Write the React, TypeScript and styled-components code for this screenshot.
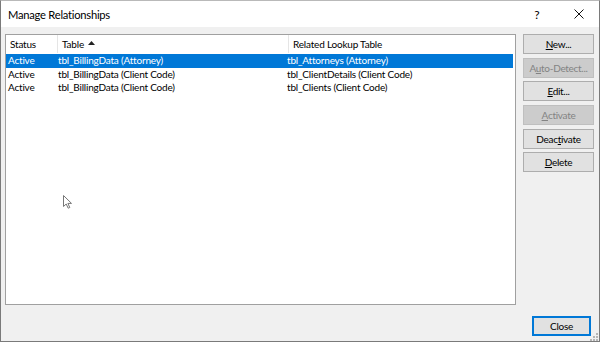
import styled, { createGlobalStyle } from "styled-components";

const GlobalStyle = createGlobalStyle`
  html, body {
    margin: 0;
    padding: 0;
    background: #ffffff;
  }
  body {
    font-family: Lato, "Liberation Sans", sans-serif;
    font-size: 12px;
    color: #000;
  }
`;

const relationships = [
  { status: "Active", table: "tbl_BillingData (Attorney)", related: "tbl_Attorneys (Attorney)" },
  { status: "Active", table: "tbl_BillingData (Client Code)", related: "tbl_ClientDetails (Client Code)" },
  { status: "Active", table: "tbl_BillingData (Client Code)", related: "tbl_Clients (Client Code)" },
];

const App = () => {
  return (
    <>
      <GlobalStyle />
      <Window>
        <TitleBar>
          <Title>Manage Relationships</Title>
          <TitleButtons>
            <HelpGlyph>?</HelpGlyph>
            <CloseGlyph width="10" height="10" viewBox="0 0 10 10">
              <path d="M0.5 0.5 L9.5 9.5 M9.5 0.5 L0.5 9.5" stroke="#111" strokeWidth="1" />
            </CloseGlyph>
          </TitleButtons>
        </TitleBar>

        <Body>
          <Main>
            <ListBox>
              <HeaderRow>
                <HeaderCell $width={52}>Status</HeaderCell>
                <HeaderCell $width={231}>
                  Table
                  <SortArrow width="7" height="4" viewBox="0 0 7 4">
                    <path d="M0 4 L3.5 0 L7 4 Z" fill="#222" />
                  </SortArrow>
                </HeaderCell>
                <HeaderCell>Related Lookup Table</HeaderCell>
              </HeaderRow>
              {relationships.map((r, i) => (
                <Row key={i} $selected={i === 0}>
                  <Cell $width={50}>{r.status}</Cell>
                  <Cell $width={229}>{r.table}</Cell>
                  <Cell>{r.related}</Cell>
                </Row>
              ))}
              <Pointer width="11" height="14" viewBox="0 0 11 14">
                <path
                  d="M0.5 0.5 L0.5 11.5 L3.2 9 L5.2 13.2 L6.8 12.5 L4.9 8.4 L8.5 8.4 Z"
                  fill="#fff"
                  stroke="#777"
                  strokeWidth="1"
                />
              </Pointer>
            </ListBox>

            <ButtonColumn>
              <DialogButton>
                <u>N</u>ew...
              </DialogButton>
              <DialogButton disabled>
                A<u>u</u>to-Detect...
              </DialogButton>
              <DialogButton>
                <u>E</u>dit...
              </DialogButton>
              <DialogButton disabled>
                <u>A</u>ctivate
              </DialogButton>
              <DialogButton>
                Deac<u>t</u>ivate
              </DialogButton>
              <DialogButton>
                <u>D</u>elete
              </DialogButton>
            </ButtonColumn>
          </Main>

          <Footer>
            <CloseButton>Close</CloseButton>
            <Grip width="8" height="8" viewBox="0 0 8 8">
              <g fill="#b5b5b5">
                <rect x="6" y="0" width="2" height="2" />
                <rect x="3" y="3" width="2" height="2" />
                <rect x="6" y="3" width="2" height="2" />
                <rect x="0" y="6" width="2" height="2" />
                <rect x="3" y="6" width="2" height="2" />
                <rect x="6" y="6" width="2" height="2" />
              </g>
            </Grip>
          </Footer>
        </Body>
      </Window>
    </>
  );
};

const Window = styled.div`
  width: 600px;
  height: 342px;
  box-sizing: border-box;
  border: 1px solid #7a7a7a;
  border-top-color: #b9b9b9;
  display: flex;
  flex-direction: column;
  background: #f0f0f0;
`;

const TitleBar = styled.div`
  height: 26px;
  background: #ffffff;
  display: flex;
  align-items: center;
  justify-content: space-between;
  padding: 0 0 0 7px;
`;

const Title = styled.div`
  font-size: 11.2px;
  letter-spacing: -0.25px;
  padding-top: 1px;
`;

const TitleButtons = styled.div`
  display: flex;
  align-items: center;
  height: 100%;
`;

const HelpGlyph = styled.div`
  width: 26px;
  text-align: center;
  font-size: 12px;
  margin-right: 24px;
`;

const CloseGlyph = styled.svg`
  display: block;
  margin: 0 15px 0 0;
`;

const Body = styled.div`
  flex: 1;
  display: flex;
  flex-direction: column;
  padding: 7px 5px 0 4px;
`;

const Main = styled.div`
  display: flex;
  gap: 7px;
`;

const ListBox = styled.div`
  position: relative;
  width: 511px;
  height: 271px;
  box-sizing: border-box;
  border: 1px solid #a0a0a0;
  background: #ffffff;
  padding: 0 2px 0 0;
  font-size: 10px;
  letter-spacing: -0.2px;
`;

const HeaderRow = styled.div`
  display: flex;
  height: 18px;
  align-items: center;
  margin-bottom: 1px;
`;

const HeaderCell = styled.div<{ $width?: number }>`
  display: flex;
  align-items: center;
  box-sizing: border-box;
  height: 100%;
  padding-left: 4px;
  flex: ${(p) => (p.$width ? `0 0 ${p.$width}px` : "1")};
  border-right: ${(p) => (p.$width ? "1px solid #e5e5e5" : "none")};
`;

const SortArrow = styled.svg`
  display: block;
  margin-left: 4px;
  margin-top: -2px;
`;

const Row = styled.div<{ $selected?: boolean }>`
  display: flex;
  height: 13.5px;
  align-items: center;
  background: ${(p) => (p.$selected ? "#0078d7" : "transparent")};
  color: ${(p) => (p.$selected ? "#ffffff" : "#000000")};
`;

const Cell = styled.div<{ $width?: number }>`
  box-sizing: border-box;
  padding-left: 2px;
  flex: ${(p) => (p.$width ? `0 0 ${p.$width}px` : "1")};
  white-space: nowrap;
  line-height: 13px;
`;

const Pointer = styled.svg`
  position: absolute;
  left: 57px;
  top: 160px;
`;

const ButtonColumn = styled.div`
  display: flex;
  flex-direction: column;
  gap: 3.7px;
  width: 71px;
`;

const DialogButton = styled.button`
  height: 20px;
  box-sizing: border-box;
  padding: 0;
  border: 1px solid ${(p) => (p.disabled ? "#bfbfbf" : "#adadad")};
  background: ${(p) => (p.disabled ? "#cccccc" : "#e1e1e1")};
  color: ${(p) => (p.disabled ? "#838383" : "#000000")};
  font-family: inherit;
  font-size: 10px;
  letter-spacing: -0.3px;
  line-height: 16px;
  white-space: nowrap;
  u {
    text-decoration-thickness: 1px;
    text-underline-offset: 1px;
  }
`;

const Footer = styled.div`
  flex: 1;
  position: relative;
  display: flex;
  justify-content: flex-end;
  align-items: flex-start;
  padding: 11px 3px 0 0;
`;

const CloseButton = styled(DialogButton)`
  width: 59px;
  border: 2px solid #0078d7;
`;

const Grip = styled.svg`
  position: absolute;
  right: -4px;
  bottom: 0;
`;

export default App;
